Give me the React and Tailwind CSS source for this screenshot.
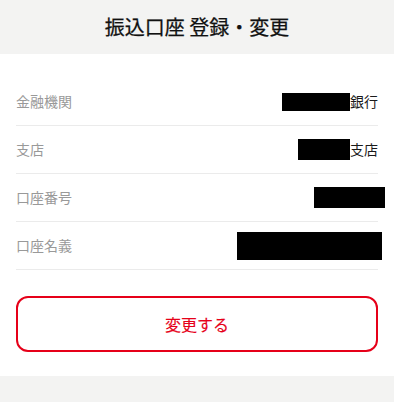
const rows = [
  { label: '金融機関', box: 'w-[68px] h-[18px]', suffix: '銀行' },
  { label: '支店', box: 'w-[52px] h-[21px]', suffix: '支店' },
  { label: '口座番号', box: 'w-[71px] h-[21px] -mr-[7px]', suffix: '' },
  { label: '口座名義', box: 'w-[145px] h-[28px] -mr-[4px]', suffix: '' },
];

export default function App() {
  return (
    <div
      className="min-h-[402px] bg-[#f3f3f2] text-[#222]"
      style={{ fontFamily: '"Noto Sans CJK JP", "Noto Sans", sans-serif' }}
    >
      <header className="flex h-[54px] items-center justify-center">
        <h1 className="text-[20px] font-normal text-[#111] [-webkit-text-stroke:0.25px_#111]">振込口座 登録・変更</h1>
      </header>

      <main className="bg-white px-4 pt-6 pb-6">
        <div>
          {rows.map((row) => (
            <div key={row.label} className="flex h-[48px] items-center justify-between border-b border-[#ebebeb]">
              <span className="text-[14px] text-[#999]">{row.label}</span>
              <span className="flex items-center text-[14px] text-[#1a1a1a]">
                <span className={`inline-block bg-black ${row.box}`} />
                {row.suffix && <span>{row.suffix}</span>}
              </span>
            </div>
          ))}
        </div>

        <button
          type="button"
          className="mt-[26px] flex h-[56px] w-full items-center justify-center rounded-[12px] border-2 border-[#e60019] bg-white text-[16px] font-normal text-[#e60019] [-webkit-text-stroke:0.15px_#e60019]"
        >
          変更する
        </button>
      </main>
    </div>
  );
}
